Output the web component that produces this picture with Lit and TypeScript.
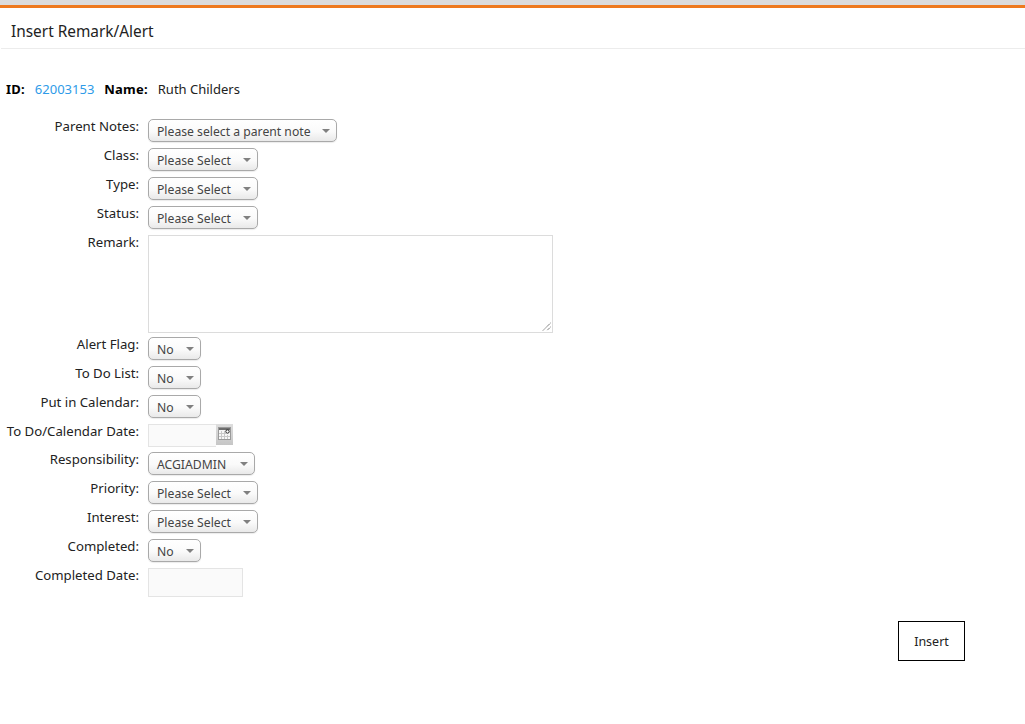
import { LitElement, html, css, svg } from "lit";
import { customElement } from "lit/decorators.js";

type Row = { label: string; kind: "select" | "textarea" | "date" | "empty"; value?: string; width?: number };

const rows: Row[] = [
  { label: "Parent Notes:", kind: "select", value: "Please select a parent note", width: 189 },
  { label: "Class:", kind: "select", value: "Please Select", width: 110 },
  { label: "Type:", kind: "select", value: "Please Select", width: 110 },
  { label: "Status:", kind: "select", value: "Please Select", width: 110 },
  { label: "Remark:", kind: "textarea" },
  { label: "Alert Flag:", kind: "select", value: "No", width: 53 },
  { label: "To Do List:", kind: "select", value: "No", width: 53 },
  { label: "Put in Calendar:", kind: "select", value: "No", width: 53 },
  { label: "To Do/Calendar Date:", kind: "date" },
  { label: "Responsibility:", kind: "select", value: "ACGIADMIN", width: 107 },
  { label: "Priority:", kind: "select", value: "Please Select", width: 110 },
  { label: "Interest:", kind: "select", value: "Please Select", width: 110 },
  { label: "Completed:", kind: "select", value: "No", width: 53 },
  { label: "Completed Date:", kind: "empty" },
];

@customElement("app-root")
export class AppRoot extends LitElement {
  static styles = css`
    :host {
      display: block;
      height: 724px;
      background: #fff;
      color: #111;
      font-family: "Noto Sans", "Open Sans", sans-serif;
      font-size: 13px;
      overflow: hidden;
    }
    .top {
      height: 3px;
      background: #ee7a1f;
      border-top: 5px solid #dcdcdc;
    }
    .head {
      box-sizing: border-box;
      height: 41px;
      border-bottom: 1px solid #ececec;
      display: flex;
      align-items: center;
      font-size: 15.4px;
      color: #222;
      margin-left: 1px;
      padding: 7px 0 0 10px;
    }
    .ident {
      display: flex;
      align-items: center;
      height: 18px;
      margin-top: 31px;
      padding-left: 6px;
    }
    .ident b { font-weight: 700; color: #000; letter-spacing: 0.2px; }
    .id-val { color: #2e9be8; margin-left: 10px; margin-right: 10px; }
    .name-val { margin-left: 10px; color: #222; }
    .form {
      margin-top: 21px;
      display: grid;
      grid-template-columns: 139px auto;
      column-gap: 9px;
      row-gap: 6px;
      justify-content: start;
    }
    .label {
      text-align: right;
      line-height: 14px;
      color: #222;
      font-size: 13.2px;
      white-space: nowrap;
    }
    .control { display: flex; }
    .select {
      box-sizing: border-box;
      height: 23px;
      display: flex;
      align-items: center;
      justify-content: space-between;
      padding: 1px 6px 0 8px;
      border: 1px solid #a9a9a9;
      border-radius: 5px;
      background: linear-gradient(#ffffff 0%, #fafafa 55%, #e9e9e9 100%);
      color: #444;
      font-size: 12.2px;
      white-space: nowrap;
      box-shadow: 0 1px 1px rgba(0, 0, 0, 0.08);
    }
    .arrow { width: 8px; height: 4px; flex: none; }
    .area {
      box-sizing: border-box;
      width: 405px;
      height: 98px;
      margin-bottom: -2px;
      border: 1px solid #dcdcdc;
      background: #fff;
      position: relative;
    }
    .grip { position: absolute; right: 1px; bottom: 1px; width: 9px; height: 9px; }
    .date { display: flex; height: 23px; margin-bottom: -1px; }
    .date-input {
      box-sizing: border-box;
      width: 68px;
      height: 23px;
      background: #fafafa;
      border: 1px solid #e4e4e4;
      border-right: none;
    }
    .date-btn {
      box-sizing: border-box;
      width: 17px;
      height: 21px;
      background: linear-gradient(#dedede, #c6c6c6);
      display: flex;
      align-items: flex-start;
      justify-content: center;
      padding-top: 3px;
    }
    .empty {
      box-sizing: border-box;
      width: 95px;
      height: 29px;
      background: #fafafa;
      border: 1px solid #e4e4e4;
    }
    .actions {
      display: flex;
      justify-content: flex-end;
      padding-right: 60px;
      margin-top: 24px;
    }
    .btn {
      box-sizing: border-box;
      width: 67px;
      height: 40px;
      border: 1px solid #000;
      background: #fff;
      color: #222;
      font: inherit;
      font-size: 12.5px;
      padding: 0;
    }
  `;

  private arrow() {
    return html`<svg class="arrow" viewBox="0 0 8 4"><path d="M0 0h8L4 4z" fill="#808080"></path></svg>`;
  }

  private control(r: Row) {
    if (r.kind === "select") {
      return html`<div class="select" style="width:${r.width}px"><span>${r.value}</span>${this.arrow()}</div>`;
    }
    if (r.kind === "textarea") {
      return html`<div class="area">
        <svg class="grip" viewBox="0 0 9 9">
          ${svg`<path d="M8.5 1L1 8.5M8.5 5L5 8.5" stroke="#555" stroke-width="1" stroke-dasharray="1 .6" fill="none"></path>`}
        </svg>
      </div>`;
    }
    if (r.kind === "date") {
      return html`<div class="date">
        <div class="date-input"></div>
        <div class="date-btn">
          <svg width="13" height="13" viewBox="0 0 13 13">
            <rect x=".5" y=".5" width="12" height="12" fill="#f7f7f7" stroke="#9a9a9a"></rect>
            <rect x="1" y="1" width="11" height="2" fill="#6e6e6e"></rect>
            <path d="M1 6.5h7M1 9.5h11M3.5 4v8M6.5 4v8M9.5 8v4" stroke="#c8c8c8" fill="none"></path>
            <circle cx="9.5" cy="4.5" r="1.7" fill="#fff" stroke="#222"></circle>
          </svg>
        </div>
      </div>`;
    }
    return html`<div class="empty"></div>`;
  }

  render() {
    return html`
      <div class="top"></div>
      <div class="head">Insert Remark/Alert</div>
      <div class="ident">
        <b>ID:</b><span class="id-val">62003153</span><b>Name:</b><span class="name-val">Ruth Childers</span>
      </div>
      <div class="form">
        ${rows.map(
          (r) => html`<div class="label">${r.label}</div><div class="control">${this.control(r)}</div>`
        )}
      </div>
      <div class="actions"><button class="btn">Insert</button></div>
    `;
  }
}
